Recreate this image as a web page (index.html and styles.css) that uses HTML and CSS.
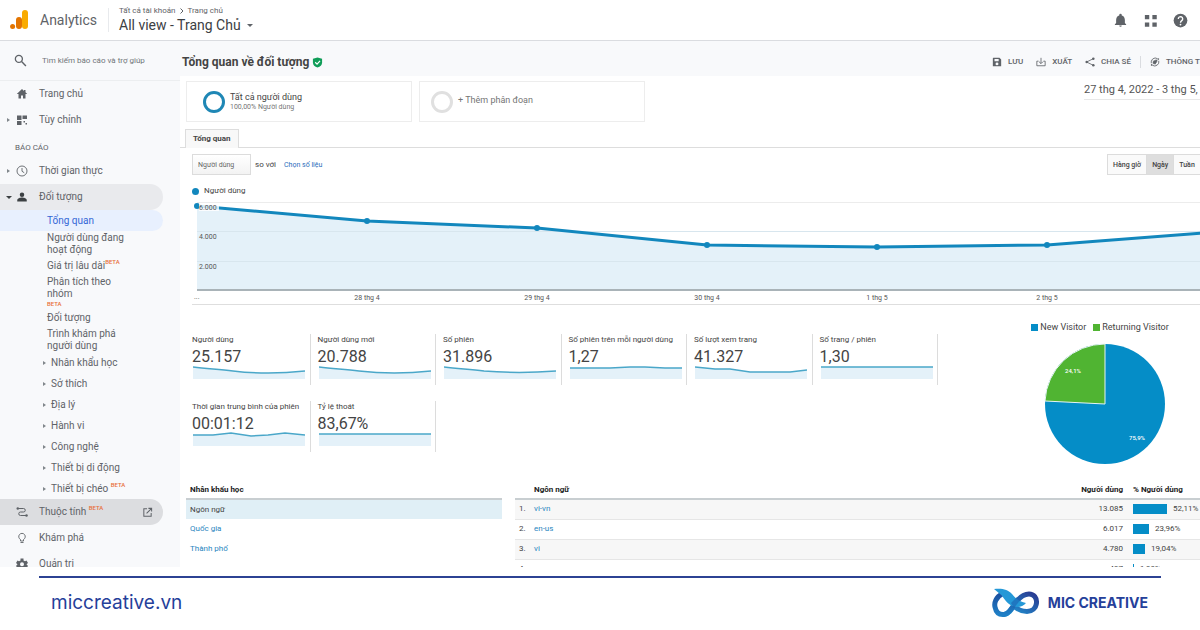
FILE: index.html
```html
<!DOCTYPE html>
<html lang="vi">
<head>
<meta charset="utf-8">
<meta name="viewport" content="width=device-width, initial-scale=1">
<title>Tổng quan về đối tượng - Analytics</title>
<link rel="stylesheet" href="styles.css">
</head>
<body>
<div class="app">
  <header class="header">
    <a class="brand" href="#">
      <svg class="brand-logo" viewBox="0 0 18 20" aria-hidden="true"><rect x="12" y="0" width="6" height="19" rx="3" fill="#f9ab00"/><rect x="6" y="7" width="6" height="12" rx="3" fill="#e37400"/><circle cx="2.600" cy="16.500" r="2.500" fill="#e37400"/></svg>
      <span>Analytics</span>
    </a>
    <div class="account">
      <div class="crumbs">Tất cả tài khoản <svg class="crumb-sep" viewBox="0 0 4 6" aria-hidden="true"><path d="M.5.500 3 3 .5 5.500" fill="none" stroke="#5f6368"/></svg> Trang chủ</div>
      <button class="view">All view - Trang Chủ <i class="caret"></i></button>
    </div>
    <nav class="header-tools" aria-label="Công cụ">
      <button aria-label="Thông báo"><svg viewBox="0 0 24 24"><path d="M12 22a2 2 0 0 0 2-2h-4a2 2 0 0 0 2 2zm7-6v-5c0-3.500-1.900-6.300-5-7.100V3a2 2 0 0 0-4 0v.9C6.900 4.700 5 7.500 5 11v5l-2 2v1h18v-1z"/></svg></button>
      <button aria-label="Ứng dụng"><svg viewBox="0 0 24 24"><path d="M3 3h7v7H3zM15 3h7v7h-7zM3 15h7v7H3zM15 15h7v7h-7z"/></svg></button>
      <button aria-label="Trợ giúp"><svg viewBox="0 0 24 24"><circle cx="12" cy="12" r="11"/><path d="M8.500 9.500a3.500 3.500 0 1 1 5.500 2.800c-1.300.9-2 1.500-2 3.200" fill="none" stroke="#fff" stroke-width="2.200"/><circle cx="12" cy="18.500" r="1.400" fill="#fff"/></svg></button>
    </nav>
  </header>

  <div class="workspace">
    <aside class="sidebar">
      <label class="search">
        <svg class="icon" viewBox="0 0 24 24"><circle cx="9" cy="9" r="6.500" fill="none" stroke="#5f6368" stroke-width="2.400"/><path d="m14 14 8 8" stroke="#5f6368" stroke-width="2.600"/></svg>
        <input type="search" placeholder="Tìm kiếm báo cáo và trợ giúp" aria-label="Tìm kiếm báo cáo và trợ giúp">
      </label>
      <nav class="menu">
        <a class="item" href="#"><i class="arrow none"></i><svg class="icon" viewBox="0 0 24 24"><path d="M12 2 1.500 12H5v9h5v-6h4v6h5v-9h3.500L19 8.500V4h-3v1.800z"/></svg>Trang chủ</a>
        <a class="item" href="#"><i class="arrow"></i><svg class="icon" viewBox="0 0 24 24"><path d="M2 3h9v9H2zM13 3h9v7h-9zM2 14h9v8H2zM15 14h3v3h-3zM19 18h3v3h-3z"/></svg>Tùy chỉnh</a>
        <h2 class="menu-title">BÁO CÁO</h2>
        <a class="item" href="#"><i class="arrow"></i><svg class="icon" viewBox="0 0 24 24"><circle cx="12" cy="12" r="10" fill="none" stroke="#5f6368" stroke-width="1.800"/><path d="M12 6v6.500l4.500 3" fill="none" stroke="#5f6368" stroke-width="1.800"/></svg>Thời gian thực</a>
        <a class="item open" href="#"><i class="arrow down"></i><svg class="icon" viewBox="0 0 24 24"><circle cx="12" cy="7.500" r="4.500"/><path d="M2.500 21v-3c0-3.200 6-5 9.500-5s9.500 1.800 9.500 5v3z"/></svg>Đối tượng</a>
        <a class="current" href="#">Tổng quan</a>
        <div class="sub">
          <a href="#">Người dùng đang<br>hoạt động</a>
          <a href="#">Giá trị lâu dài<sup class="beta">BETA</sup></a>
          <a href="#">Phân tích theo<br>nhóm<span class="beta beta-below">BETA</span></a>
          <a href="#">Đối tượng</a>
          <a href="#">Trình khám phá<br>người dùng</a>
        </div>
        <div class="tree">
          <a href="#"><i class="arrow"></i>Nhân khẩu học</a>
          <a href="#"><i class="arrow"></i>Sở thích</a>
          <a href="#"><i class="arrow"></i>Địa lý</a>
          <a href="#"><i class="arrow"></i>Hành vi</a>
          <a href="#"><i class="arrow"></i>Công nghệ</a>
          <a href="#"><i class="arrow"></i>Thiết bị di động</a>
          <a href="#"><i class="arrow"></i><span>Thiết bị chéo <sup class="beta">BETA</sup></span></a>
        </div>
        <a class="item hovered" href="#"><i class="arrow none"></i><svg class="icon" viewBox="0 0 24 24"><path d="M5 5h10a3.500 3.500 0 0 1 0 7H9a3.500 3.500 0 0 0 0 7h11" fill="none" stroke="#5f6368" stroke-width="2"/><circle cx="3.500" cy="5" r="2.500"/><circle cx="21" cy="19" r="2.500"/></svg><span>Thuộc tính <sup class="beta">BETA</sup></span><svg class="external" viewBox="0 0 24 24"><path d="M11 4H4v16h16v-7M14 3h7v7M21 3 10 14" fill="none" stroke="#5f6368" stroke-width="2.200"/></svg></a>
        <a class="item" href="#"><i class="arrow none"></i><svg class="icon" viewBox="0 0 24 24"><path d="M9 18v-3a6.500 6.500 0 1 1 6 0v3zM9 21h6" fill="none" stroke="#5f6368" stroke-width="1.800"/></svg>Khám phá</a>
        <a class="item" href="#"><i class="arrow none"></i><svg class="icon" viewBox="0 0 24 24"><path fill-rule="evenodd" d="M9 1h6v4l3 1.500L21 5l3 5-3 2.500L24 16l-3 4-3-1-3 1.500V24H9v-3.500L6 19l-3 1-3-4 3-3.500L0 10l3-5 3 1.500L9 5zm3 7.500a4 4 0 1 0 0 8 4 4 0 0 0 0-8z"/></svg>Quản trị</a>
      </nav>
    </aside>

    <main class="main">
      <div class="title-bar">
        <h1>Tổng quan về đối tượng</h1>
        <svg class="shield" viewBox="0 0 24 24" aria-hidden="true"><path d="M12 1 22 4v8c0 6-4 9-10 11C6 21 2 18 2 12V4z" fill="#0f9d58"/><path d="m7 11.500 4 4 6.500-7" fill="none" stroke="#fff" stroke-width="2.600"/></svg>
        <div class="toolbar">
          <button><svg viewBox="0 0 24 24"><path fill-rule="evenodd" d="M3 2h15l4 4v16H2V3zm3 3v5h10V5zm6 8a3.500 3.500 0 1 0 0 7 3.500 3.500 0 0 0 0-7z"/></svg>LƯU</button>
          <button><svg viewBox="0 0 24 24"><path d="M6 10H2v11h20V10h-4M12 2v13M7 11l5 5 5-5" fill="none" stroke="#5f6368" stroke-width="2"/></svg>XUẤT</button>
          <button><svg viewBox="0 0 24 24"><path d="M20 4 4 12l16 8" fill="none" stroke="#5f6368" stroke-width="2"/><circle cx="20" cy="4" r="3"/><circle cx="4" cy="12" r="3"/><circle cx="20" cy="20" r="3"/></svg>CHIA SẺ</button>
          <button class="insights"><svg viewBox="0 0 24 24"><path d="M3 15A10 10 0 0 1 18 4M21 9A10 10 0 0 1 6 20" fill="none" stroke="#5f6368" stroke-width="2"/><circle cx="20" cy="5" r="2"/><circle cx="4" cy="19" r="2"/><path d="M7 15c0-5 4-8 10-8 0 5-3 10-8 10M6 9l5 2M14 18l-2-5" stroke="#5f6368" stroke-width="1.500"/></svg>THÔNG TIN CHI TIẾT</button>
        </div>
      </div>

      <div class="report">
        <div class="segments">
          <button class="segment"><i class="ring"></i><span>Tất cả người dùng<small>100,00% Người dùng</small></span></button>
          <button class="segment add"><i class="ring"></i><span>+ Thêm phân đoạn</span></button>
          <button class="date-range">27 thg 4, 2022 - 3 thg 5, 2022</button>
        </div>
        <div class="tabs"><button>Tổng quan</button></div>

        <div class="content">
          <div class="controls">
            <select class="metric-select" aria-label="Số liệu"><option>Người dùng</option></select>
            <span>so với</span>
            <a class="pick" href="#">Chọn số liệu</a>
            <div class="granularity"><button>Hàng giờ</button><button class="on">Ngày</button><button>Tuần</button><button>Tháng</button></div>
          </div>
          <div class="series"><i class="dot"></i>Người dùng</div>
          <svg class="chart" viewBox="0 0 1048 106" role="img" aria-label="Người dùng theo ngày">
            <path class="grid-line" d="M5 4.500H1048M5 33.500H1048M5 63.500H1048"/>
            <path class="area" d="M5 8 175 23 345 30 515 47 685 49 855 47 1025 34V92H5z"/>
            <path class="grid-line faint" d="M5 33.500H1048M5 63.500H1048"/>
            <path class="axis" d="M5 92H1048"/>
            <path class="line" d="M5 8 175 23 345 30 515 47 685 49 855 47 1025 34"/>
            <g class="points"><circle cx="5" cy="8" r="3"/><circle cx="175" cy="23" r="3"/><circle cx="345" cy="30" r="3"/><circle cx="515" cy="47" r="3"/><circle cx="685" cy="49" r="3"/><circle cx="855" cy="47" r="3"/><circle cx="1025" cy="34" r="3"/></g>
            <rect class="label-back" x="7" y="5" width="20" height="8"/>
            <g class="tick"><text x="7" y="12">6.000</text><text x="7" y="41">4.000</text><text x="7" y="71">2.000</text></g>
            <g class="tick"><text x="2" y="101">...</text></g>
            <g class="tick mid"><text x="175" y="102">28 thg 4</text><text x="345" y="102">29 thg 4</text><text x="515" y="102">30 thg 4</text><text x="685" y="102">1 thg 5</text><text x="855" y="102">2 thg 5</text></g>
          </svg>

          <div class="summary">
            <div class="metrics">
              <div class="metric"><span>Người dùng</span><strong>25.157</strong><svg viewBox="0 0 112 15"><path class="area" d="M0 2C15 4 25 4 40 6 65 9 85 9 112 6V14H0z"/><path class="spark" d="M0 2C15 4 25 4 40 6 65 9 85 9 112 6"/></svg></div>
              <div class="metric"><span>Người dùng mới</span><strong>20.788</strong><svg viewBox="0 0 112 15"><path class="area" d="M0 2C15 4 25 4 40 6 65 9 85 9 112 6V14H0z"/><path class="spark" d="M0 2C15 4 25 4 40 6 65 9 85 9 112 6"/></svg></div>
              <div class="metric"><span>Số phiên</span><strong>31.896</strong><svg viewBox="0 0 112 15"><path class="area" d="M0 2C15 4 25 4 40 6 65 8 85 8 112 6V14H0z"/><path class="spark" d="M0 2C15 4 25 4 40 6 65 8 85 8 112 6"/></svg></div>
              <div class="metric"><span>Số phiên trên mỗi người dùng</span><strong>1,27</strong><svg viewBox="0 0 112 15"><path class="area" d="M0 3H40L60 2 75 2 95 3H112V14H0z"/><path class="spark" d="M0 3H40L60 2 75 2 95 3H112"/></svg></div>
              <div class="metric"><span>Số lượt xem trang</span><strong>41.327</strong><svg viewBox="0 0 112 15"><path class="area" d="M0 2 20 4 35 4 55 7H95L112 5V14H0z"/><path class="spark" d="M0 2 20 4 35 4 55 7H95L112 5"/></svg></div>
              <div class="metric"><span>Số trang / phiên</span><strong>1,30</strong><svg viewBox="0 0 112 15"><path class="area" d="M0 2H112V14H0z"/><path class="spark" d="M0 2H112"/></svg></div>
              <div class="metric"><span>Thời gian trung bình của phiên</span><strong>00:01:12</strong><svg viewBox="0 0 112 15"><path class="area" d="M0 3H20L38 1 58 4 75 3 92 1 112 3V14H0z"/><path class="spark" d="M0 3H20L38 1 58 4 75 3 92 1 112 3"/></svg></div>
              <div class="metric"><span>Tỷ lệ thoát</span><strong>83,67%</strong><svg viewBox="0 0 112 15"><path class="area" d="M0 2H112V14H0z"/><path class="spark" d="M0 2H112"/></svg></div>
            </div>
            <figure class="visitors">
              <figcaption><span><i class="swatch"></i>New Visitor</span><span><i class="swatch green"></i>Returning Visitor</span></figcaption>
              <svg viewBox="0 0 122 122" role="img" aria-label="New Visitor 75,9%, Returning Visitor 24,1%"><circle cx="61" cy="61" r="60" fill="#058dc7"/><path d="M61 61V1A60 60 0 0 0 1 58z" fill="#50b432" stroke="#e6f4f4"/><text x="29" y="30">24,1%</text><text x="93" y="97">75,9%</text></svg>
            </figure>
          </div>
        </div>

        <div class="tables">
          <table class="dimensions">
            <thead><tr><th>Nhân khẩu học</th></tr></thead>
            <tbody>
              <tr class="selected"><td>Ngôn ngữ</td></tr>
              <tr><td><a href="#">Quốc gia</a></td></tr>
              <tr><td><a href="#">Thành phố</a></td></tr>
            </tbody>
          </table>
          <table class="languages">
            <thead><tr><th class="rank"></th><th>Ngôn ngữ</th><th class="count">Người dùng</th><th class="share">% Người dùng</th></tr></thead>
            <tbody>
              <tr><td>1.</td><td><a href="#">vi-vn</a></td><td class="count">13.085</td><td class="share"><i class="bar" style="width:34px"></i>52,11%</td></tr>
              <tr><td>2.</td><td><a href="#">en-us</a></td><td class="count">6.017</td><td class="share"><i class="bar" style="width:16px"></i>23,96%</td></tr>
              <tr><td>3.</td><td><a href="#">vi</a></td><td class="count">4.780</td><td class="share"><i class="bar" style="width:12px"></i>19,04%</td></tr>
              <tr><td>4.</td><td><a href="#">en</a></td><td class="count">497</td><td class="share"><i class="bar" style="width:1px"></i>1,98%</td></tr>
            </tbody>
          </table>
        </div>
      </div>
    </main>
  </div>
</div>

<footer class="footer">
  <a class="site" href="#">miccreative.vn</a>
  <a class="company" href="#">
    <svg viewBox="0 0 48 30" aria-hidden="true">
      <defs>
        <linearGradient id="loopLeft" x1="0" y1="0" x2="0" y2="1"><stop offset="0" stop-color="#1b4f9f"/><stop offset="1" stop-color="#1f7fc6"/></linearGradient>
        <linearGradient id="loopRight" x1="0" y1="1" x2="1" y2="0"><stop offset="0" stop-color="#1e9fdb"/><stop offset="1" stop-color="#2a3990"/></linearGradient>
      </defs>
      <path d="M12 26.500C18 26 21 18 25 13 29 8 33 6 37 6 42 6 45 10 44.500 15 44 20 40 23.500 35 23.500 30 23.500 26 22 22 18" fill="none" stroke="url(#loopRight)" stroke-width="5"/>
      <path d="M10 6C4 9 2 15 3 19 4 24 7 27 12 26.500 17 26 19 21 22 17" fill="none" stroke="url(#loopLeft)" stroke-width="5"/>
      <path d="M2 1C9 0 16 1 20 6 23 10 28 14 34 15 30 20 22 20 17 16 12 12 11 8 8 6 6 4 4 3 2 1z" fill="#2498d7"/>
      <path d="m22 20 7-9-4-2-6 6z" fill="#1d60b0" fill-opacity=".6"/>
    </svg>
    <span>MIC CREATIVE</span>
  </a>
</footer>
</body>
</html>
```
FILE: styles.css
```css
* { box-sizing: border-box; }
body {
  margin: 0;
  height: 100vh;
  display: grid;
  grid-template-rows: minmax(0, 1fr) 63px;
  background: #fff;
  color: #444;
  font: 8px/12px Roboto, "Liberation Sans", sans-serif;
}
button, input, select { font: inherit; color: inherit; border: 0; background: none; padding: 0; margin: 0; }
button { cursor: pointer; text-align: left; }
a { color: inherit; text-decoration: none; }
i { font-style: normal; flex: none; }
svg { flex: none; display: block; fill: #5f6368; }
h1, h2, figure { margin: 0; }

.app { display: flex; flex-direction: column; overflow: hidden; }

/* Header */
.header {
  flex: none;
  display: flex;
  align-items: center;
  height: 41px;
  padding: 0 12px 0 10px;
  border-bottom: 1px solid #dadce0;
}
.brand { display: flex; align-items: center; gap: 12px; width: 99px; height: 24px; font-size: 14px; color: #5f6368; border-right: 1px solid #e8eaed; white-space: nowrap; }
.brand-logo { width: 18px; height: 20px; }
.account { padding-left: 10px; }
.crumbs { display: flex; align-items: center; gap: 4px; line-height: 10px; color: #5f6368; }
.crumb-sep { width: 4px; height: 6px; }
.view { display: flex; align-items: center; gap: 6px; font-size: 14px; line-height: 18px; color: #3c4043; }
.caret { border: 3px solid transparent; border-top-color: #5f6368; border-bottom: 0; }
.header-tools { display: flex; gap: 15px; margin-left: auto; }
.header-tools svg { width: 15px; height: 15px; }

.workspace { flex: 1; min-height: 0; display: flex; }

/* Sidebar */
.sidebar { flex: none; width: 180px; background: #f8f9fb; color: #5f6368; font-size: 10px; overflow: hidden; }
.search { display: flex; align-items: center; gap: 15px; height: 40px; padding-left: 14px; border-bottom: 1px solid #eceef0; }
.search .icon { width: 13px; height: 13px; }
.search input { width: 130px; font-size: 8px; outline: 0; }
.search input::placeholder { color: #70757a; opacity: 1; }
.menu { padding-right: 17px; }
.item { display: flex; align-items: center; height: 26px; padding-left: 7px; }
.item .icon { width: 12px; height: 12px; margin: 0 11px 0 5px; }
.arrow { width: 0; border: 2px solid transparent; border-left: 3px solid #80868b; border-right-width: 1px; }
.arrow.none { border-color: transparent; }
.arrow.down { border: 3px solid transparent; border-top-color: #3c4043; border-bottom: 0; margin: 0 -1px; }
.menu-title { height: 25px; padding: 9px 0 0 15px; font-size: 8px; font-weight: 400; line-height: 12px; }
.item.open { background: #e9eaed; border-radius: 0 13px 13px 0; }
.item.open .icon { fill: #3c4043; }
.item.hovered { background: #dcdde0; border-radius: 0 13px 13px 0; }
.external { width: 11px; height: 11px; margin: 0 10px 0 auto; }
.current { display: block; padding-left: 47px; line-height: 21px; background: #e8f0fe; color: #3367d6; border-radius: 0 11px 11px 0; }
.sub { display: flex; flex-direction: column; gap: 4px; padding: 1px 0 0 47px; }
.beta { font-size: 6px; line-height: 0; font-weight: 500; color: #e8713c; vertical-align: 5px; }
.beta-below { display: block; line-height: 8px; }
.tree { padding: 0 0 0 43px; }
.tree a { display: flex; align-items: center; gap: 4px; height: 21px; }

/* Report */
.main { flex: 1; min-width: 0; overflow: hidden; }
.title-bar { display: flex; align-items: center; gap: 3px; height: 35px; padding: 7px 10px 0 2px; margin-right: -50px; background: #f8f9fb; }
h1 { font-size: 12px; line-height: 16px; font-weight: 700; color: #444; }
.shield { width: 11px; height: 11px; }
.toolbar { display: flex; align-items: center; gap: 13px; width: 248px; margin-left: auto; font-weight: 500; color: #5f6368; }
.toolbar button { display: flex; align-items: center; gap: 6px; white-space: nowrap; }
.toolbar svg { width: 10px; height: 10px; }
.toolbar .insights { margin-left: -4px; padding-left: 9px; border-left: 1px solid #dadce0; }
.report { margin-right: -50px; padding-top: 5px; }
.segments { display: flex; align-items: flex-start; gap: 7px; padding: 0 10px 0 6px; }
.segment { display: flex; align-items: center; gap: 5px; width: 226px; height: 41px; padding-left: 16px; border: 1px solid #ededed; font-size: 9px; line-height: 10px; }
.segment small { display: block; font-size: 7px; color: #757575; }
.ring { width: 22px; height: 22px; border: 3px solid #1f87b5; border-radius: 50%; }
.add { padding-left: 11px; color: #757575; }
.add .ring { border-color: #e0e0e0; }
.add span { padding-bottom: 4px; }
.date-range { width: 156px; margin-left: auto; padding: 1px 0 2px; border-bottom: 1px solid #e8e8e8; font-size: 11px; line-height: 15px; color: #555; white-space: nowrap; }
.tabs { display: flex; margin-top: 7px; padding-left: 5px; border-bottom: 1px solid #ddd; }
.tabs button { height: 19px; margin-bottom: -1px; padding: 0 7px; border: 1px solid #ddd; border-bottom: 0; background: #f8f8f8; font-weight: 700; }
.content { padding: 6px 10px 0 12px; }
.controls { display: flex; align-items: center; height: 21px; gap: 4px; }
.metric-select { appearance: none; width: 59px; height: 21px; padding-left: 5px; border: 1px solid #dcdcdc; background: linear-gradient(#fff, #f3f3f3); font-size: 7px; color: #666; }
.pick { margin-left: 4px; font-size: 7px; color: #2a6ebb; }
.granularity { display: flex; width: 133px; margin-left: auto; font-size: 7px; font-weight: 500; }
.granularity button { height: 21px; padding: 0 5px; background: #fafafa; border: solid #dcdcdc; border-width: 1px 0 1px 1px; }
.granularity .on { background: #dedede; }
.series { display: flex; align-items: center; gap: 5px; margin-top: 10px; }
.dot { width: 7px; height: 7px; background: #1287bd; border-radius: 50%; }
.chart { width: 100%; margin-top: 1px; border-bottom: 1px solid #dedede; }
.area { fill: #e4f1f9; }
.grid-line { stroke: #ececec; }
.faint { stroke: #d8e6ee; }
.axis { stroke: #a9b3b8; stroke-width: 2; }
.line { fill: none; stroke: #1287bd; stroke-width: 3; }
.points { fill: #1287bd; }
.label-back { fill: #fff; fill-opacity: .8; }
.tick { fill: #555; font-size: 7px; }
.mid { text-anchor: middle; }

.summary { display: flex; padding-top: 14px; }
.metrics { display: grid; grid-template-columns: repeat(6, minmax(0, 1fr)); gap: 16px 0; flex: 0 1 753px; align-content: start; padding-top: 15px; }
.metric { height: 51px; margin-right: 7px; border-right: 1px solid #dcdcdc; white-space: nowrap; }
.metric span { display: block; }
.metric strong { display: block; font-size: 16px; line-height: 22px; font-weight: 400; }
.metric svg { width: 112px; height: 15px; margin: -3px 0 0 1px; }
.spark { fill: none; stroke: #4aa7c9; stroke-width: 1.500; }
.visitors { width: 270px; margin-left: auto; }
.visitors figcaption { display: flex; justify-content: center; gap: 7px; padding: 2px 10px 0 0; font-size: 9px; white-space: nowrap; }
.visitors figcaption span { display: flex; align-items: center; gap: 2px; }
.swatch { width: 7px; height: 7px; background: #058dc7; }
.green { background: #50b432; }
.visitors svg { width: 122px; margin: 10px auto 0; }
.visitors text { fill: #fff; font-size: 6px; font-weight: 500; text-anchor: middle; }

/* Tables */
.tables { display: flex; align-items: flex-start; gap: 13px; padding: 17px 10px 0 6px; }
table { border-collapse: collapse; table-layout: fixed; }
th { height: 17px; padding: 0 4px; border-bottom: 2px solid #c8ced1; text-align: left; color: #222; font-weight: 700; }
td { height: 20px; padding: 0 4px; }
.tables a { color: #2a86c0; }
.dimensions { width: 316px; }
.selected { background: #e0eff6; }
.languages { flex: 1; }
.languages tbody tr { height: 20px; border-bottom: 1px solid #e6e6e6; }
.languages tbody tr:nth-child(odd) { background: #f7f7f7; }
.languages .rank { width: 15px; }
.languages .count { width: 100px; text-align: right; padding-right: 5px; }
.languages .share { width: 112px; padding-left: 5px; }
.bar { display: inline-block; height: 10px; margin-right: 6px; background: #058dc7; vertical-align: middle; }

/* Footer */
.footer { display: flex; align-items: center; justify-content: space-between; margin: 9px 39px 0; padding: 0 13px 2px 12px; border-top: 2px solid #2c4293; color: #25409a; }
.site { font: 19px/24px Inter, sans-serif; }
.company { display: flex; align-items: center; gap: 8px; font: 700 14px/18px Inter, sans-serif; }
.company svg { width: 48px; height: 30px; }
```
